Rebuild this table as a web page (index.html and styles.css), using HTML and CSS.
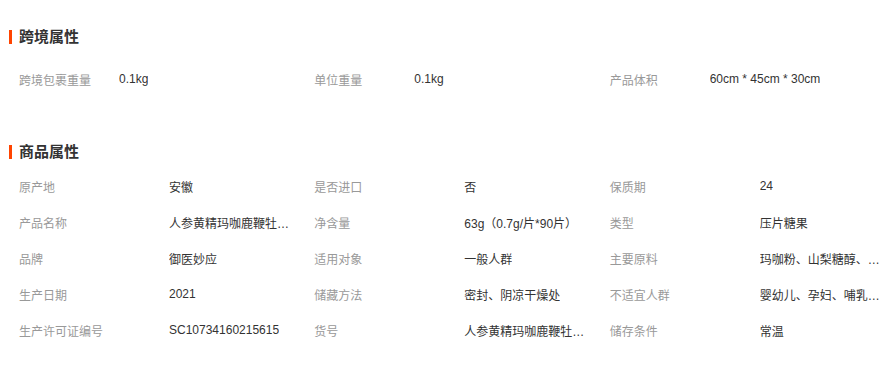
FILE: index.html
```html
<!DOCTYPE html>
<html lang="zh-CN">
<head>
<meta charset="utf-8">
<title>商品属性</title>
<link rel="stylesheet" href="styles.css">
</head>
<body>
<div class="page">
  <section class="block block-cross">
    <h3 class="block-title">跨境属性</h3>
    <ul class="attrs attrs-cross">
      <li class="attr"><span class="label">跨境包裹重量</span><span class="value">0.1kg</span></li>
      <li class="attr"><span class="label">单位重量</span><span class="value">0.1kg</span></li>
      <li class="attr"><span class="label">产品体积</span><span class="value">60cm * 45cm * 30cm</span></li>
    </ul>
  </section>
  <section class="block block-goods">
    <h3 class="block-title">商品属性</h3>
    <ul class="attrs attrs-goods">
      <li class="attr"><span class="label">原产地</span><span class="value">安徽</span></li>
      <li class="attr"><span class="label">是否进口</span><span class="value">否</span></li>
      <li class="attr"><span class="label">保质期</span><span class="value">24</span></li>
      <li class="attr"><span class="label">产品名称</span><span class="value" title="人参黄精玛咖鹿鞭牡蛎片">人参黄精玛咖鹿鞭牡蛎片</span></li>
      <li class="attr"><span class="label">净含量</span><span class="value">63g（0.7g/片*90片）</span></li>
      <li class="attr"><span class="label">类型</span><span class="value">压片糖果</span></li>
      <li class="attr"><span class="label">品牌</span><span class="value">御医妙应</span></li>
      <li class="attr"><span class="label">适用对象</span><span class="value">一般人群</span></li>
      <li class="attr"><span class="label">主要原料</span><span class="value" title="玛咖粉、山梨糖醇、人参">玛咖粉、山梨糖醇、人参</span></li>
      <li class="attr"><span class="label">生产日期</span><span class="value">2021</span></li>
      <li class="attr"><span class="label">储藏方法</span><span class="value">密封、阴凉干燥处</span></li>
      <li class="attr"><span class="label">不适宜人群</span><span class="value" title="婴幼儿、孕妇、哺乳期妇女">婴幼儿、孕妇、哺乳期妇女</span></li>
      <li class="attr"><span class="label">生产许可证编号</span><span class="value">SC10734160215615</span></li>
      <li class="attr"><span class="label">货号</span><span class="value" title="人参黄精玛咖鹿鞭牡蛎片">人参黄精玛咖鹿鞭牡蛎片</span></li>
      <li class="attr"><span class="label">储存条件</span><span class="value">常温</span></li>
    </ul>
  </section>
</div>
</body>
</html>
```
FILE: styles.css
```css
* { box-sizing: border-box; }
html, body { margin: 0; padding: 0; background: #fff; }
body {
  font-family: "Liberation Sans", "Noto Sans CJK SC", sans-serif;
  font-size: 12px;
  color: #333;
}
.page { padding: 27px 0 0 9px; width: 895px; }
.block-title {
  margin: 0;
  height: 20px;
  line-height: 20px;
  font-size: 15px;
  font-weight: bold;
  color: #333;
  display: flex;
  align-items: center;
  gap: 7px;
}
.block-title::before {
  content: "";
  width: 3px;
  height: 14px;
  background: #ff4400;
}
.attrs {
  list-style: none;
  margin: 0;
  padding: 0;
  width: 886px;
  display: grid;
  grid-template-columns: repeat(3, 1fr);
}
.attrs-cross { margin-top: 14px; }
.block-goods { margin-top: 45px; }
.attrs-goods { margin-top: 6px; }
.attr {
  display: flex;
  align-items: center;
  height: 36px;
  padding-left: 10px;
  white-space: nowrap;
}
.label { color: #999; flex: none; }
.attrs-cross .label { width: 100px; }
.attrs-goods .label { width: 150px; }
.value {
  color: #333;
  max-width: 122px;
  overflow: hidden;
  text-overflow: ellipsis;
}
.attrs-cross .value { max-width: none; }
```
